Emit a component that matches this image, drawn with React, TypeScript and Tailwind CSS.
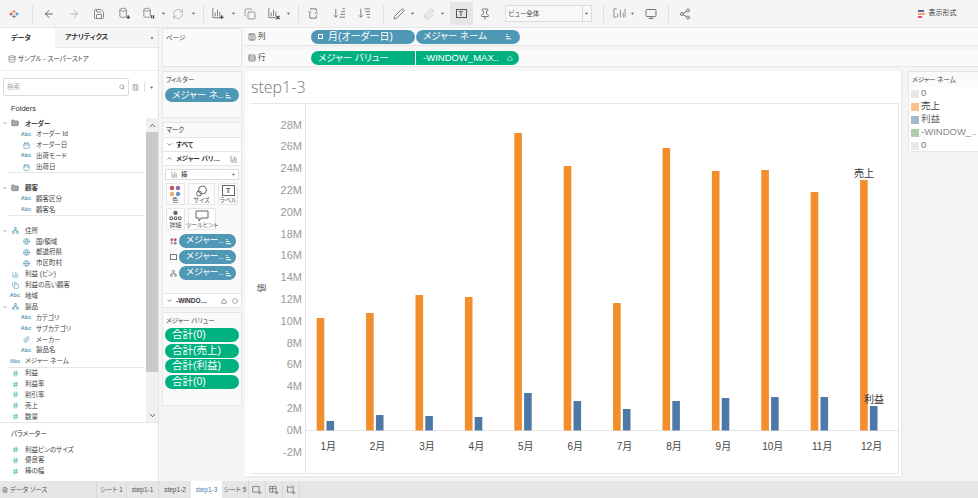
import React from 'react';
import { ArrowLeft, ArrowRight, Save, RefreshCw, Copy, Pen, Paperclip, Pin, Monitor, Share2, Search, ChevronDown, ChevronUp, Folder, Calendar, Globe, Network, Columns3, Rows3, Hash, Triangle, Circle, BarChart3, FileText, Database } from 'lucide-react';

const font = { fontFamily: '"Liberation Sans", "Noto Sans CJK JP", sans-serif' };

const months = ['1月', '2月', '3月', '4月', '5月', '6月', '7月', '8月', '9月', '10月', '11月', '12月'];
const salesTop = [317, 312, 294, 296, 132, 165, 302, 147, 170, 169, 191, 179];
const profitTop = [420, 414, 415, 416, 392, 400, 408, 400, 397, 396, 396, 405];
const ticks = ['28M', '26M', '24M', '22M', '20M', '18M', '16M', '14M', '12M', '10M', '8M', '6M', '4M', '2M', '0M', '-2M'];

type Row = { k: 'abc' | 'date' | 'geo' | 'hier' | 'folder' | 'num' | 'bin' | 'set' | 'clip'; t: string; lvl: number; bold?: boolean; line?: boolean; gap?: boolean; };

const rows: Row[] = [
  { k: 'folder', t: 'オーダー', lvl: 0, bold: true },
  { k: 'abc', t: 'オーダー Id', lvl: 1 },
  { k: 'date', t: 'オーダー日', lvl: 1 },
  { k: 'abc', t: '出荷モード', lvl: 1 },
  { k: 'date', t: '出荷日', lvl: 1, line: true },
  { k: 'folder', t: '顧客', lvl: 0, bold: true, gap: true },
  { k: 'abc', t: '顧客区分', lvl: 1 },
  { k: 'abc', t: '顧客名', lvl: 1, line: true },
  { k: 'hier', t: '住所', lvl: 0, gap: true },
  { k: 'geo', t: '国/領域', lvl: 1 },
  { k: 'geo', t: '都道府県', lvl: 1 },
  { k: 'geo', t: '市区町村', lvl: 1 },
  { k: 'bin', t: '利益 (ビン)', lvl: 2 },
  { k: 'set', t: '利益の高い顧客', lvl: 2 },
  { k: 'abc', t: '地域', lvl: 2 },
  { k: 'hier', t: '製品', lvl: 0 },
  { k: 'abc', t: 'カテゴリ', lvl: 1 },
  { k: 'abc', t: 'サブカテゴリ', lvl: 1 },
  { k: 'clip', t: 'メーカー', lvl: 1 },
  { k: 'abc', t: '製品名', lvl: 1 },
  { k: 'abc', t: 'メジャー ネーム', lvl: 2, line: true },
  { k: 'num', t: '利益', lvl: 2 },
  { k: 'num', t: '利益率', lvl: 2 },
  { k: 'num', t: '割引率', lvl: 2 },
  { k: 'num', t: '売上', lvl: 2 },
  { k: 'num', t: '数量', lvl: 2 },
];

const FieldIcon = ({ k }: { k: Row['k'] }) => {
  if (k === 'abc') return <span className="text-[5.5px] font-bold text-[#5b93b5] leading-none">Abc</span>;
  if (k === 'date') return <Calendar className="w-[7px] h-[7px] text-[#4e97b5]" />;
  if (k === 'geo') return <Globe className="w-[7px] h-[7px] text-[#4e97b5]" />;
  if (k === 'hier') return <Network className="w-[7px] h-[7px] text-[#4e97b5]" />;
  if (k === 'folder') return <Folder className="w-[8px] h-[8px] text-[#777] fill-[#aaa]" />;
  if (k === 'num') return <Hash className="w-[7px] h-[7px] text-[#3fb596]" />;
  if (k === 'bin') return <BarChart3 className="w-[7px] h-[7px] text-[#4e97b5]" />;
  if (k === 'set') return <Copy className="w-[7px] h-[7px] text-[#4e97b5]" />;
  return <Paperclip className="w-[7px] h-[7px] text-[#4e97b5]" />;
};

const TreeRow = ({ r }: { r: Row }) => (
  <div className={r.gap ? 'mt-[9px]' : ''}>
    <div className="h-[10.9px] flex items-center text-[6.5px] text-[#444] whitespace-nowrap">
      <span className="w-[9px] flex justify-center shrink-0">
        {r.lvl === 0 && <ChevronDown className="w-[6px] h-[6px] text-[#666]" />}
      </span>
      {r.lvl === 1 && <span className="w-[11px] shrink-0" />}
      <span className="w-[12px] flex justify-center shrink-0"><FieldIcon k={r.k} /></span>
      <span className={r.bold ? 'ml-[4px] font-bold' : 'ml-[4px]'}>{r.t}</span>
    </div>
    {r.line && <div className="h-px bg-[#e6e6e6] ml-[8px] w-[135px]" />}
  </div>
);

const Pill = ({ text, green, icon, className }: { text: string; green?: boolean; icon?: React.ReactNode; className: string }) => (
  <div className={`flex items-center rounded-full text-white whitespace-nowrap ${green ? 'bg-[#00b180]' : 'bg-[#4e97b5]'} ${className}`}>
    <span className="flex-1">{text}</span>
    {icon}
  </div>
);

const SortMark = () => (
  <svg viewBox="0 0 8 8" className="w-[7px] h-[7px] shrink-0 ml-[2px]" fill="#fff"><path d="M1 1h2v1H1zM1 3.5h4v1H1zM1 6h6v1H1z" /></svg>
);

const Caret = ({ className = '' }: { className?: string }) => <svg viewBox="0 0 6 6" className={`w-[5px] h-[5px] shrink-0 ${className}`} fill="#666"><path d="M1 2h4L3 4.5z" /></svg>;

const ToolSep = ({ className }: { className: string }) => <div className={`w-px h-[18px] bg-[#e0e0e0] shrink-0 ${className}`} />;

const Tool = ({ children, className }: { children: React.ReactNode; className: string }) => (
  <div className={`w-[14px] h-[14px] flex items-center justify-center shrink-0 text-[#666] ${className}`}>{children}</div>
);

const ic = 'w-[12px] h-[12px]';

// toolbar drawings that lucide has no close match for
const Glyph = ({ d, dark }: { d: string; dark?: string }) => (
  <svg viewBox="0 0 14 14" className="w-[13px] h-[13px]" fill="none" stroke="currentColor" strokeWidth="1">
    <path d={d} />
    {dark && <path d={dark} stroke="#333" strokeWidth="1.2" />}
  </svg>
);
const cyl = 'M2 3c0-2.2 7-2.2 7 0v7c0 1.5-7 1.5-7 0zM2 3c0 1.8 7 1.8 7 0';
const bars = 'M2 1v10.5h8M4.5 10V6M7 10V3M9.5 10V5';

const MarkBtn = ({ label, className, children }: { label: string; className: string; children: React.ReactNode }) => (
  <div className={`border border-[#e6e6e6] bg-[#fdfdfd] flex flex-col items-center justify-between pt-[1px] text-[6px] text-[#555] leading-none ${className}`}>
    {children}
    <span className="whitespace-nowrap pb-[1px]">{label}</span>
  </div>
);

const Chart = () => {
  const ox = 250;
  const oy = 103;
  return (
    <svg viewBox="0 0 648 369" className="w-[648px] h-[369px] block" style={font}>
      <line x1={305.5 - ox} y1={0} x2={305.5 - ox} y2={369} stroke="#e6e6e6" />
      <line x1={305 - ox} y1={429.5 - oy} x2={648} y2={429.5 - oy} stroke="#e6e6e6" />
      {ticks.map((t, i) => (
        <text key={t} x={302 - ox} y={124 + i * 21.8 + 3.5 - oy} fontSize="11" fill="#999" textAnchor="end">{t}</text>
      ))}
      <text x={265 - ox} y={287 - oy} fontSize="9" fill="#555" textAnchor="middle" transform={`rotate(-90 ${265 - ox} ${287 - oy})`}>値</text>
      {months.map((m, i) => {
        const x = 316.7 + i * 49.4 - ox;
        return (
          <g key={m}>
            <rect x={x} y={salesTop[i] - oy} width={7.6} height={429.5 - salesTop[i]} fill="#f28e2b" />
            <rect x={x + 9.8} y={profitTop[i] - oy} width={7.6} height={429.5 - profitTop[i]} fill="#4e79a7" />
            <text x={x + 11.5} y={449 - oy} fontSize="10" fill="#444" textAnchor="middle">{m}</text>
          </g>
        );
      })}
      <text x={864 - ox} y={176 - oy} fontSize="10" fill="#333" textAnchor="middle">売上</text>
      <text x={874 - ox} y={402 - oy} fontSize="10" fill="#333" textAnchor="middle">利益</text>
    </svg>
  );
};

export default function App() {
  return (
    <div className="w-[978px] h-[498px] overflow-hidden flex flex-col bg-[#f5f5f5] text-[#333] [font-feature-settings:'palt']" style={font}>
      <div className="h-[28px] shrink-0 flex items-center border-b border-[#e6e6e6]">
        <svg viewBox="0 0 12 12" className="w-[10px] h-[10px] ml-[9px] shrink-0">
          <path d="M6 1v4M4 3h4" stroke="#e8762d" strokeWidth="1" />
          <path d="M6 7v4M4 9h4" stroke="#5b6591" strokeWidth="1" />
          <path d="M2.5 4v4M.5 6h4" stroke="#c72035" strokeWidth="1" />
          <path d="M9.5 4v4M7.5 6h4" stroke="#1f77b4" strokeWidth="1" />
        </svg>
        <ToolSep className="ml-[13px]" />
        <Tool className="ml-[9px]"><ArrowLeft className={ic} /></Tool>
        <Tool className="ml-[11px] text-[#bbb]"><ArrowRight className={ic} /></Tool>
        <Tool className="ml-[11px] text-[#888]"><Save className={ic} /></Tool>
        <Tool className="ml-[11px] text-[#888]"><Glyph d={cyl} dark="M11 9v4M9 11h4" /></Tool>
        <Tool className="ml-[10px] text-[#888]"><Glyph d={cyl} dark="M10.5 9v3.5M12.5 9v3.5" /></Tool>
        <Caret className="ml-[5.5px]" />
        <Tool className="ml-[5.5px] text-[#bbb]"><RefreshCw className={ic} /></Tool>
        <Caret className="ml-[5.5px]" />
        <ToolSep className="ml-[7.5px]" />
        <Tool className="ml-[6.5px] text-[#777]"><Glyph d={bars} dark="M11.5 9v4M9.5 11h4" /></Tool>
        <Caret className="ml-[6.5px]" />
        <Tool className="ml-[6.5px] text-[#999]"><Copy className={ic} /></Tool>
        <Tool className="ml-[10px] text-[#777]"><Glyph d={bars} dark="M10 9.5l3.5 3.5M13.5 9.5L10 13" /></Tool>
        <Caret className="ml-[5.5px]" />
        <ToolSep className="ml-[6.5px]" />
        <Tool className="ml-[8px] text-[#777]"><Glyph d="M3 2h7v3M10 9v3H3V6M1.5 4.5L3 6l1.5-1.5M8.5 7.5L10 6l1.5 1.5" /></Tool>
        <Tool className="ml-[12px] text-[#777]"><Glyph d="M3 2v9M1 9l2 2 2-2M7 11h6M8 8h5M9 5h4M10 2h3" /></Tool>
        <Tool className="ml-[11px] text-[#777]"><Glyph d="M3 2v9M1 9l2 2 2-2M7 2h6M8 5h5M9 8h4M10 11h3" /></Tool>
        <ToolSep className="ml-[11px]" />
        <Tool className="ml-[8px] text-[#777]"><Pen className={ic} /></Tool>
        <Caret className="ml-[4.5px]" />
        <Tool className="ml-[6.5px] text-[#ccc]"><Paperclip className={ic} /></Tool>
        <Caret className="ml-[4.5px]" />
        <div className="ml-[4.5px] w-[23px] h-[23px] bg-[#e6e6e6] flex items-center justify-center shrink-0">
          <div className="w-[11px] h-[9px] border border-[#555] text-[7px] font-bold leading-none text-[#555] flex items-center justify-center">T</div>
        </div>
        <Tool className="ml-[5px] text-[#777]"><Pin className={ic} /></Tool>
        <div className="ml-[13px] w-[87px] h-[17px] bg-[#f8f8f8] border border-[#dcdcdc] flex items-center text-[6.5px] text-[#444] pl-[3px] shrink-0">
          <span className="flex-1">ビュー全体</span>
          <span className="w-[9px] h-full border-l border-[#dcdcdc] flex items-center justify-center"><Caret /></span>
        </div>
        <ToolSep className="ml-[11px]" />
        <Tool className="ml-[9px] text-[#888]"><Glyph d="M1 2h3M1 2v9h3M5 11V7M8 11V3M11 11V6M13 2v9" /></Tool>
        <Caret className="ml-[3.5px]" />
        <Tool className="ml-[8.5px] text-[#777]"><Monitor className={ic} /></Tool>
        <ToolSep className="ml-[10px]" />
        <Tool className="ml-[9px] text-[#777]"><Share2 className={ic} /></Tool>
        <svg viewBox="0 0 8 8" className="w-[8px] h-[8px] ml-[226px] shrink-0">
          <path d="M0 0h6v2H0z" fill="#5b6591" /><path d="M0 3h7v2H0z" fill="#f2a96b" /><path d="M0 6h4v2H0z" fill="#e0586a" />
        </svg>
        <span className="ml-[3px] text-[7px] whitespace-nowrap">表示形式</span>
      </div>

      <div className="flex-1 flex min-h-0">
        <div className="w-[159px] shrink-0 bg-white flex flex-col border-r border-[#e6e6e6]">
          <div className="h-[20px] shrink-0 flex items-stretch bg-[#f5f5f5] text-[7px] font-bold">
            <div className="w-[55px] bg-white flex items-center pl-[11px]">データ</div>
            <div className="flex-1 border-b border-[#e6e6e6] flex items-center pl-[10px] pr-[5px] justify-between">
              <span>アナリティクス</span><span className="w-[2px] h-[2px] rounded-full bg-[#666]" />
            </div>
          </div>
          <div className="h-[23px] shrink-0 flex items-center pl-[8px] text-[6.5px] text-[#444] border-b border-[#eee]">
            <Database className="w-[8px] h-[8px] text-[#777] mr-[2px]" />サンプル - スーパーストア
          </div>
          <div className="mt-[7px] ml-[3px] flex items-center shrink-0">
            <div className="w-[126px] h-[18px] border border-[#dcdcdc] rounded-[2px] flex items-center justify-between px-[3px] text-[6.5px] text-[#aaa]">
              <span>検索</span><Search className="w-[6px] h-[6px] text-[#666]" />
            </div>
            <Columns3 className="w-[7px] h-[7px] ml-[3px] text-[#888]" />
            <div className="w-px h-[10px] bg-[#e0e0e0] ml-[5px] mr-[4px]" />
            <Caret />
          </div>
          <div className="mt-[7px] ml-[11px] h-[11px] text-[7.5px] flex items-center shrink-0">Folders</div>
          <div className="mt-[4px] flex relative h-[304px] shrink-0">
            <div className="w-[146px]">
              {rows.map((r) => <TreeRow key={r.t} r={r} />)}
            </div>
            <div className="w-[12px] flex flex-col bg-[#f0f0f0]">
              <div className="h-[14px] flex items-center justify-center"><ChevronUp className="w-[9px] h-[9px] text-[#333]" /></div>
              <div className="h-[240px] bg-[#c9c9c9]" />
              <div className="flex-1 flex items-end justify-center pb-[2px]"><ChevronDown className="w-[9px] h-[9px] text-[#333]" /></div>
            </div>
          </div>
          <div className="border-t border-[#e6e6e6] pt-[6px] shrink-0">
            <div className="ml-[11px] h-[10px] flex items-center text-[6.5px]">パラメーター</div>
            <div className="mt-[5px]">
              {['利益ビンのサイズ', '優良客', '棒の幅'].map((p) => (
                <TreeRow key={p} r={{ k: 'num', t: p, lvl: 2 }} />
              ))}
            </div>
          </div>
        </div>

        <div className="w-[80px] ml-[3px] shrink-0 flex flex-col gap-[4px]">
          <div className="h-[39px] shrink-0 bg-[#fafafa] border border-[#e6e6e6] pt-[4px] pl-[3px] text-[6.5px] text-[#555]">ページ</div>
          <div className="h-[47px] shrink-0 bg-[#fafafa] border border-[#e6e6e6] pt-[3px] px-[2px] text-[6.5px] text-[#444]">
            <div className="pl-[1px] h-[10px]">フィルター</div>
            <Pill text="メジャー ネ.." icon={<SortMark />} className="mt-[3px] h-[14px] text-[9.5px] pl-[7px] pr-[8px]" />
          </div>
          <div className="h-[186px] shrink-0 bg-[#fafafa] border border-[#e6e6e6] flex flex-col text-[6.5px]">
            <div className="h-[15px] flex items-center pl-[3px] border-b border-[#e6e6e6]">マーク</div>
            <div className="h-[14px] flex items-center pl-[3px] border-b border-[#e6e6e6] bg-white font-bold"><ChevronDown className="w-[7px] h-[7px] mr-[3px]" />すべて</div>
            <div className="h-[14px] flex items-center px-[3px] border-b border-[#e6e6e6] bg-white font-bold whitespace-nowrap"><ChevronUp className="w-[7px] h-[7px] mr-[3px]" /><span className="flex-1">メジャー バリ…</span><BarChart3 className="w-[8px] h-[8px] text-[#777]" /></div>
            <div className="mt-[3px] mx-[2px] h-[11px] bg-white border border-[#dcdcdc] flex items-center pl-[5px] pr-[2px]">
              <BarChart3 className="w-[7px] h-[7px] text-[#777] mr-[3px]" /><span className="flex-1">棒</span><Caret />
            </div>
            <div className="mt-[3px] mx-[3px] flex gap-[3px]">
              <MarkBtn label="色" className="w-[19px] h-[22px]">
                <svg viewBox="0 0 12 12" className="w-[12px] h-[12px]"><circle cx="3" cy="3" r="2.2" fill="#c84a5a" /><circle cx="9" cy="3" r="2.2" fill="#8f6aa8" /><circle cx="3" cy="9" r="2.2" fill="#f2a96b" /><circle cx="9" cy="9" r="2.2" fill="#6e94c4" /></svg>
              </MarkBtn>
              <MarkBtn label="サイズ" className="w-[28px] h-[22px]">
                <svg viewBox="0 0 12 12" className="w-[13px] h-[13px]" fill="none" stroke="#666"><circle cx="7" cy="5" r="4" /><circle cx="3.5" cy="8.5" r="2.5" /></svg>
              </MarkBtn>
              <MarkBtn label="ラベル" className="w-[20px] h-[22px]">
                <div className="w-[13px] h-[11px] border border-[#666] text-[8px] font-bold leading-none text-[#666] flex items-center justify-center">T</div>
              </MarkBtn>
            </div>
            <div className="mt-[3px] mx-[3px] flex gap-[3px]">
              <MarkBtn label="詳細" className="w-[19px] h-[22px]">
                <svg viewBox="0 0 12 10" className="w-[13px] h-[11px]" fill="none" stroke="#666"><circle cx="6" cy="2.5" r="1.5" fill="#666" /><circle cx="2" cy="7.5" r="1.3" /><circle cx="6" cy="7.5" r="1.3" /><circle cx="10" cy="7.5" r="1.3" /></svg>
              </MarkBtn>
              <MarkBtn label="ツールヒント" className="w-[28px] h-[22px]">
                <svg viewBox="0 0 14 12" className="w-[14px] h-[12px]" fill="none" stroke="#666"><path d="M1 1h12v7H6L4 11V8H1z" /></svg>
              </MarkBtn>
            </div>
            <div className="mt-[4px] flex flex-col gap-[2px]">
              {[0, 1, 2].map((i) => (
                <div key={i} className="flex items-center h-[14px] pl-[4px]">
                  <span className="w-[12px] flex justify-center">
                    {i === 0 && <svg viewBox="0 0 8 8" className="w-[7px] h-[7px]"><circle cx="2" cy="2" r="1.6" fill="#8f6aa8" /><circle cx="6" cy="2" r="1.6" fill="#c84a5a" /><circle cx="2" cy="6" r="1.6" fill="#f2a96b" /><circle cx="6" cy="6" r="1.6" fill="#6e94c4" /></svg>}
                    {i === 1 && <div className="w-[7px] h-[6px] border border-[#777]" />}
                    {i === 2 && <Network className="w-[7px] h-[7px] text-[#777]" />}
                  </span>
                  <Pill text="メジャー.." icon={<SortMark />} className="w-[57px] h-[14px] text-[9px] pl-[7px] pr-[5px]" />
                </div>
              ))}
            </div>
            <div className="mt-auto h-[14px] border-t border-[#e6e6e6] bg-white flex items-center px-[3px] font-bold whitespace-nowrap">
              <ChevronDown className="w-[7px] h-[7px] mr-[3px]" />
              <span className="flex-1">-WINDO…</span>
              <Triangle className="w-[6px] h-[6px] mr-[5px]" />
              <Circle className="w-[6px] h-[6px] text-[#666]" />
            </div>
          </div>
          <div className="h-[94px] shrink-0 bg-[#fafafa] border border-[#e6e6e6] pt-[3px] px-[2px] text-[6.5px] text-[#444]">
            <div className="pl-[1px] h-[10px]">メジャー バリュー</div>
            <div className="mt-[2px] flex flex-col gap-[1.6px]">
              {['合計(0)', '合計(売上)', '合計(利益)', '合計(0)'].map((t, i) => (
                <Pill key={i} green text={t} className="h-[14px] text-[10.5px] pl-[7px]" />
              ))}
            </div>
          </div>
        </div>

        <div className="flex-1 min-w-0 ml-[3px] flex flex-col gap-[4px]">
          <div className="h-[18px] shrink-0 bg-[#fafafa] border-b border-[#e6e6e6] flex items-center text-[7.5px]">
            <div className="w-[66px] pl-[3px] flex items-center"><Columns3 className="w-[8px] h-[8px] mr-[2px] text-[#555]" />列</div>
            <div className="w-[104px] h-[14px] rounded-full bg-[#4e97b5] text-white text-[10px] pl-[7px] flex items-center whitespace-nowrap">
              <span className="w-[5px] h-[5px] border border-white mr-[5px] shrink-0" />月(オーダー日)
            </div>
            <Pill text="メジャー ネーム" icon={<SortMark />} className="w-[104px] h-[14px] text-[9.5px] pl-[7px] pr-[8px] ml-px" />
          </div>
          <div className="h-[17px] shrink-0 bg-[#fafafa] border-b border-[#e6e6e6] flex items-center text-[7.5px]">
            <div className="w-[66px] pl-[3px] flex items-center"><Rows3 className="w-[8px] h-[8px] mr-[2px] text-[#555]" />行</div>
            <div className="w-[104px] h-[14px] bg-[#00b180] rounded-l-full text-white text-[9.5px] pl-[7px] flex items-center whitespace-nowrap">メジャー バリュー</div>
            <div className="w-[103px] h-[14px] ml-px bg-[#00b180] rounded-r-full text-white text-[9.5px] pl-[7px] pr-[6px] flex items-center whitespace-nowrap">
              <span className="flex-1">-WINDOW_MAX..</span><Triangle className="w-[6px] h-[6px]" />
            </div>
          </div>
          <div className="flex-1 min-h-0 flex mb-[3px]">
            <div className="w-[658px] shrink-0 bg-white border-r-2 border-b-2 border-[#ececec] flex flex-col pl-[5px] pb-[3px]">
              <div className="h-[32px] flex items-center pl-[1px] text-[16px] text-[#777] font-light shrink-0 [font-family:'Open_Sans',sans-serif]">step1-3</div>
              <div className="border-t border-r border-b border-[#e6e6e6] w-[649px] h-[371px]"><Chart /></div>
            </div>
            <div className="ml-[5px] w-[75px] h-[81px] bg-white border border-[#e6e6e6] shrink-0">
              <div className="h-[15px] bg-[#fafafa] flex items-center pl-[3px] text-[6.5px] text-[#444] whitespace-nowrap">メジャー ネーム</div>
              {[
                ['0', 'bg-[#e8e8e8]', 'text-[#777]'],
                ['売上', 'bg-[#f9c28f]', 'text-[#444]'],
                ['利益', 'bg-[#a3b8d3]', 'text-[#666]'],
                ['-WINDOW_..', 'bg-[#acd0a5]', 'text-[#888]'],
                ['0', 'bg-[#e8e8e8]', 'text-[#777]'],
              ].map(([t, sw, col], i) => (
                <div key={i} className="h-[13px] flex items-center pl-[2px]">
                  <span className={`w-[8px] h-[8px] shrink-0 ${sw}`} />
                  <span className={`ml-[2px] text-[9.5px] whitespace-nowrap ${col}`}>{t}</span>
                </div>
              ))}
            </div>
          </div>
        </div>
      </div>

      <div className="h-[17px] shrink-0 bg-[#e6e6e6] flex items-stretch text-[6.5px] text-[#555] whitespace-nowrap">
        <div className="w-[97px] flex items-center pl-[2px] border-r border-[#d8d8d8]"><FileText className="w-[6px] h-[6px] mr-[2px]" />データ ソース</div>
        <div className="w-[30px] flex items-center justify-center border-r border-[#d8d8d8]">シート 1</div>
        <div className="w-[32px] flex items-center justify-center border-r border-[#d8d8d8]">step1-1</div>
        <div className="w-[32px] flex items-center justify-center">step1-2</div>
        <div className="w-[31px] flex items-center justify-center bg-white text-[#4e79a7]">step1-3</div>
        <div className="w-[27px] flex items-center justify-center border-r border-[#d8d8d8]">シート 5</div>
        <div className="w-[17px] flex items-center justify-center border-r border-[#d8d8d8]"><svg viewBox="0 0 14 14" className="w-[10px] h-[10px]" fill="none" stroke="#666"><path d="M1 2h9v8H1zM11 9v4M9 11h4" /></svg></div>
        <div className="w-[17px] flex items-center justify-center border-r border-[#d8d8d8]"><svg viewBox="0 0 14 14" className="w-[10px] h-[10px]" fill="none" stroke="#666"><path d="M1 2h9v8H1zM1 5h9M5 2v8M11 9v4M9 11h4" /></svg></div>
        <div className="w-[17px] flex items-center justify-center border-r border-[#d8d8d8]"><svg viewBox="0 0 14 14" className="w-[10px] h-[10px]" fill="none" stroke="#666"><path d="M2 3h8v7H2zM2 1v2M10 1v2M11 9v4M9 11h4" /></svg></div>
      </div>
    </div>
  );
}
